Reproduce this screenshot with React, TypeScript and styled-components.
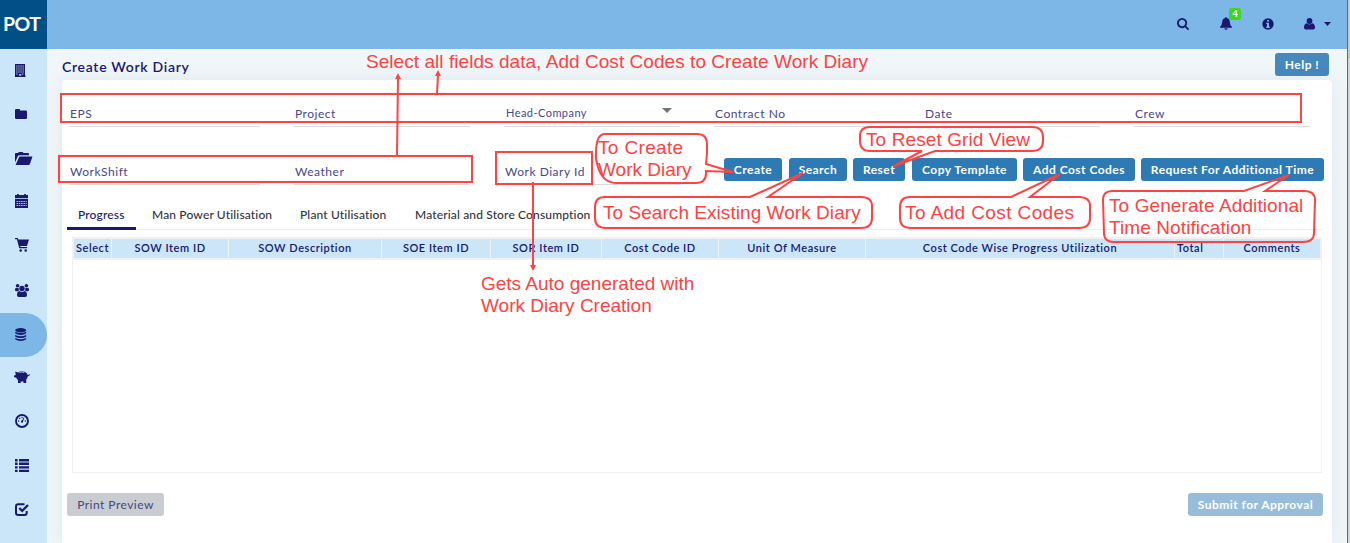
import React from "react";
import styled, { createGlobalStyle, css } from "styled-components";

const NAVY = "#191970";
const RED = "#fd4343";

const GlobalStyle = createGlobalStyle`
  * { box-sizing: border-box; }
  html, body { margin: 0; padding: 0; height: 543px; overflow: hidden; }
  body { font-family: Lato, "Liberation Sans", sans-serif; color: ${NAVY}; }
`;

const Screen = styled.div`
  position: relative;
  display: flex;
  width: 1350px;
  height: 543px;
  overflow: hidden;
  background: #f1f6f9;
`;
const Sidebar = styled.aside`
  flex: 0 0 47px;
  background: #cbe6f9;
  position: relative;
  z-index: 1;
`;
const Brand = styled.div`
  height: 49px;
  padding-left: 3px;
  background: #014f86;
  color: #fff;
  font-size: 19.5px;
  font-weight: 700;
  line-height: 48px;
  letter-spacing: -0.6px;
`;
const NavItem = styled.a<{ $active?: boolean; $lift?: boolean }>`
  display: flex;
  align-items: center;
  height: 44px;
  padding: 0 0 ${(p) => (p.$lift ? 4 : 2)}px 15px;
  border-radius: 0 22px 22px 0;
  ${(p) => p.$active && css`background: #7cb7e8;`}
  svg { display: block; overflow: visible; }
`;
const Body = styled.div`
  flex: 0 0 1300px;
  display: flex;
  flex-direction: column;
`;
const TopBar = styled.header`
  flex: 0 0 49px;
  display: flex;
  justify-content: flex-end;
  align-items: center;
  padding: 0 16px 2px 0;
  background: #7cb7e8;
  svg { display: block; }
`;
const TopIcon = styled.span<{ $gap: number }>`
  position: relative;
  margin-left: ${(p) => p.$gap}px;
`;
const Badge = styled.span`
  position: absolute;
  left: 9px;
  top: -9px;
  width: 12px;
  height: 12px;
  border-radius: 2px;
  background: #37d923;
  color: #fff;
  font-size: 9px;
  font-weight: 700;
  line-height: 12px;
  text-align: center;
`;
const TitleRow = styled.div`
  flex: 0 0 31px;
  display: flex;
  justify-content: space-between;
  align-items: flex-start;
  padding: 4px 18px 0 15px;
`;
const Title = styled.h1`
  margin: 0;
  height: 27px;
  font-size: 14px;
  line-height: 28px;
  font-weight: 600;
  letter-spacing: 0.7px;
`;
const Button = styled.button<{ $w: number; $gap?: number; $tone?: "help" | "submit" | "print" }>`
  flex: none;
  width: ${(p) => p.$w}px;
  height: 23px;
  margin: 0 0 0 ${(p) => p.$gap ?? 0}px;
  padding: 0;
  border: 0;
  border-radius: 3px;
  font-family: inherit;
  font-size: 12px;
  font-weight: 700;
  line-height: 23px;
  letter-spacing: 0.47px;
  white-space: nowrap;
  color: #fff;
  background: #2e7ab5;
  ${(p) => p.$tone === "help" && css`background: #4788bd;`}
  ${(p) => p.$tone === "submit" && css`background: #97bdda;`}
  ${(p) => p.$tone === "print" && css`background: #c9ccd1; color: #47477f; font-weight: 400;`}
`;
const Card = styled.main`
  flex: 1;
  width: 1270px;
  margin-left: 15px;
  border-radius: 4px 4px 0 0;
  background: #fff;
  box-shadow: 0 0 20px rgba(60, 100, 110, 0.09);
`;
const FieldRow = styled.div<{ $mt: number }>`
  display: grid;
  grid-template-columns: 191px repeat(5, 176px);
  column-gap: 34px;
  padding: ${(p) => p.$mt}px 0 0 7px;
`;
const Field = styled.div<{ $select?: boolean }>`
  display: flex;
  justify-content: space-between;
  height: 27px;
  padding: 3px 8px 0 1px;
  border-bottom: 1px solid #dcdcdc;
  color: #48488d;
  font-size: 12px;
  line-height: 21px;
  letter-spacing: 0.52px;
  white-space: nowrap;
  ${(p) => p.$select && css`font-size: 11px; letter-spacing: 0.45px; padding: 2px 8px 0 2px;`}
`;
const Caret = styled.span`
  width: 0;
  height: 0;
  margin-top: 6px;
  border: 5px solid transparent;
  border-top-color: #757575;
  border-bottom: 0;
`;
const Actions = styled.div`
  grid-column: 4 / 7;
  display: flex;
  padding-left: 10px;
`;
const Tabs = styled.nav`
  display: flex;
  height: 31px;
  margin: 14px 10px 0 5px;
  border-bottom: 1px solid #efefef;
`;
const Tab = styled.a<{ $active?: boolean; $w: number }>`
  width: ${(p) => p.$w}px;
  height: 31px;
  padding-left: 11px;
  margin-right: ${(p) => (p.$active ? 5 : 0)}px;
  font-size: 12px;
  font-weight: 500;
  line-height: 31px;
  letter-spacing: 0.15px;
  white-space: nowrap;
  color: #33333b;
  ${(p) => p.$active && css`color: ${NAVY}; border-bottom: 3px solid ${NAVY};`}
`;
const Grid = styled.section`
  width: 1250px;
  height: 236px;
  margin: 7px 0 0 10px;
  border: 1px solid #f1f1f1;
`;
const GridHead = styled.div`
  display: grid;
  grid-template-columns: 37px 116px 152px 108px 110px 116px 146px 308px 48px 96px;
  column-gap: 1px;
  padding: 1px 0 2px 1px;
  background: #f1f1f1;
`;
const HeadCell = styled.div<{ $left?: boolean }>`
  height: 19px;
  background: #cbe6f9;
  font-size: 11px;
  font-weight: 600;
  line-height: 18px;
  letter-spacing: 0.55px;
  text-align: ${(p) => (p.$left ? "left" : "center")};
  padding-left: ${(p) => (p.$left ? 2 : 0)}px;
  white-space: nowrap;
`;
const Footer = styled.div`
  display: flex;
  justify-content: space-between;
  padding: 20px 9px 0 5px;
`;
const WindowEdge = styled.div`
  flex: 0 0 3px;
  border-left: 1px solid #2e7ab5;
  background: linear-gradient(#c9c9c9 57px, #b5b5b5 57px, #b5b5b5 58px, #d4d4d4 58px);
`;
const Overlay = styled.svg`
  position: absolute;
  inset: 0;
  z-index: 2;
  fill: none;
  stroke: ${RED};
  stroke-width: 2;
`;
const Note = styled.p<{ $x: number; $y: number; $ls?: number }>`
  position: absolute;
  z-index: 3;
  left: ${(p) => p.$x}px;
  top: ${(p) => p.$y}px;
  margin: 0;
  font-family: "Liberation Sans", Arial, sans-serif;
  font-size: 19px;
  line-height: 22px;
  letter-spacing: ${(p) => p.$ls ?? 0}px;
  white-space: pre;
  color: ${RED};
`;

const Icon = ({ w = 14, h = 14, box, children }: { w?: number; h?: number; box?: string; children: React.ReactNode }) => (
  <svg width={w} height={h} viewBox={box ?? `0 0 ${w} ${h}`} fill={NAVY}>{children}</svg>
);

const Building = () => (
  <Icon w={11} h={13}>
    <path d="M0 0h10v11.500h.5V13H0z" />
    <path stroke="#cbe6f9" strokeWidth=".9" strokeDasharray="1.300 .8" d="M1.200 2h7.700M1.200 4h7.700M1.200 6h7.700M1.200 8h7.700M1.200 10h2.200M7 10h2" />
    <path fill="#cbe6f9" opacity=".75" d="M4 10h2.300v1.800H4z" />
  </Icon>
);
const Folder = () => (
  <Icon w={12} h={10}><path d="M0 1.200Q0 0 1.200 0h3Q5 0 5 .8v.6h5.800q1.200 0 1.200 1.200v6.200Q12 10 10.800 10H1.200Q0 10 0 8.800z" /></Icon>
);
const FolderOpen = () => (
  <Icon w={18} h={13}>
    <path d="M0 10.500V1.800Q0 .9.900.9H3L4 0h3.500l1 .9H13q1 0 1 1v1.300H4.300q-1 0-1.400.8zM4.400 4.400H17.500L15 11.800q-.4 1.200-1.500 1.200H.6z" />
  </Icon>
);
const Calendar = () => (
  <Icon w={13} h={14}>
    <path d="M0 1h2V0h1.800v1h5.400V0H11v1h2v3.200H0zM0 5h13v9H0z" />
    <path stroke="#cbe6f9" strokeWidth=".8" strokeDasharray="1.600 .7" fill="none" d="M1.500 7.500h10.300M1.500 9.500h10.300M1.500 11.500h10.300" />
  </Icon>
);
const Cart = () => (
  <Icon w={14} h={14}>
    <path d="M0 0h2.600l.8 1.500H14L12 8H5.200l.3 1.100h6.600v1.200H4.300L1.900 1.200H0z" />
    <circle cx="5.700" cy="12.500" r="1.300" /><circle cx="10.700" cy="12.500" r="1.300" />
  </Icon>
);
const Users = () => (
  <Icon w={14} h={13}>
    <circle cx="2.600" cy="1.800" r="1.800" /><circle cx="11.400" cy="1.800" r="1.800" /><circle cx="7" cy="4.500" r="2.700" />
    <path d="M0 5.800Q0 3.900 1.300 3.700q1 .6 2.300.2-.1 1.600.7 2.700-1 .1-1.500.7H1.300Q0 7.300 0 5.800zM14 5.800q0-1.900-1.300-2.100-1 .6-2.300.2.100 1.600-.7 2.700 1 .1 1.500.7h1.500Q14 7.300 14 5.800zM4.400 7.100q2.600 1.700 5.200 0 2.400.5 2.400 4.100 0 1.800-1.800 1.800H3.800Q2 13 2 11.200q0-3.600 2.400-4.100z" />
  </Icon>
);
const Database = () => (
  <Icon w={12} h={13}>
    <ellipse cx="5.700" cy="2.200" rx="5.500" ry="2.200" />
    <path d="M.2 3.800q5.500 2.500 11 0v1.500q-2 1.700-5.500 1.700T.2 5.300zM.2 6.900q5.500 2.500 11 0v1.500q-2 1.700-5.500 1.700T.2 8.400zM.2 10q5.500 2.500 11 0v1.200q-2 1.700-5.500 1.700T.2 11.200z" />
  </Icon>
);
const Piggy = () => (
  <Icon w={15} h={12} box="1 0 15 12">
    <path d="M1.200.6 4 1.500Q7-.6 10.500.7 13 1.600 13.700 4q1.100.5 1.200-1h.9q0 2.300-2 2.200-.2 2-1.600 3.400V12H9.500v-1.600H6.700V12H4V9Q2.700 8 2.300 6.800L0 6V4.600l1.800-.6z" />
    <path d="M5.300 1.500q2.500-1 5 0" stroke="#cbe6f9" strokeWidth=".8" fill="none" />
  </Icon>
);
const Gauge = () => (
  <Icon>
    <circle cx="7" cy="7" r="6" fill="none" stroke={NAVY} strokeWidth="1.900" />
    <circle cx="3.600" cy="7" r=".7" /><circle cx="4.700" cy="4.500" r=".7" /><circle cx="7" cy="3.500" r=".7" />
    <circle cx="10.400" cy="7" r=".7" /><circle cx="7" cy="7.700" r="1.100" />
    <path d="m6.600 7.500 2-3.900.7.300-1.500 4z" />
  </Icon>
);
const List = () => (
  <Icon w={14} h={13}>
    <path d="M0 0h2.600v2.400H0zM4 0h10v2.400H4zM0 3.600h2.600V6H0zM4 3.600h10V6H4zM0 7.200h2.600v2.300H0zM4 7.200h10v2.300H4zM0 10.700h2.600V13H0zM4 10.700h10V13H4z" />
  </Icon>
);
const Check = () => (
  <Icon w={14} h={13}>
    <path fill="none" stroke={NAVY} strokeWidth="2" d="M9.500 1.200H3.200Q1 1.200 1 3.400v6.400Q1 12 3.200 12h6.300q2.200 0 2.200-2.200V8" />
    <path fill="none" stroke={NAVY} strokeWidth="2.300" d="m4.300 5 2.900 2.900L13 2" />
  </Icon>
);
const Search = () => (
  <Icon w={12} h={12} box="0 128 1664 1664">
    <path d="M1152 832q0-185-131.500-316.500t-316.500-131.500-316.500 131.500-131.500 316.500 131.500 316.500 316.500 131.500 316.500-131.500 131.500-316.500zm512 832q0 52-38 90t-90 38q-54 0-90-38l-343-342q-179 124-399 124-143 0-273.500-55.500t-225-150-150-225-55.500-273.500 55.500-273.500 150-225 225-150 273.500-55.500 273.500 55.500 225 150 150 225 55.500 273.500q0 220-124 399l343 343q37 37 37 90z" />
  </Icon>
);
const Bell = () => (
  <Icon w={12} h={13}>
    <path d="M6 0q.8 0 .8.900 2.900.5 3 3.900.1 3.700 2.200 5.200v.8H0V10q2.100-1.500 2.200-5.200.1-3.400 3-3.900Q5.200 0 6 0zM4.400 11.200h3.200Q7.500 12.800 6 12.800T4.400 11.200z" />
  </Icon>
);
const Info = () => (
  <Icon w={12} h={12}>
    <circle cx="6" cy="6" r="5.700" />
    <path fill="#7cb7e8" d="M5 2h2v1.600H5zM4.200 4.700H7v3.900h.8V10H4.200V8.600H5V6h-.8z" />
  </Icon>
);
const User = () => (
  <Icon w={11} h={12}>
    <circle cx="5.500" cy="3" r="2.900" />
    <path d="M2.600 5.300q2.900 2.300 5.800 0Q11 5.800 11 9.800q0 1.700-1.700 1.700H1.700Q0 11.500 0 9.800 0 5.800 2.600 5.300z" />
  </Icon>
);

const NAV = [
  <Building />, <Folder />, <FolderOpen />, <Calendar />, <Cart />,
  <Users />, <Database />, <Piggy />, <Gauge />, <List />, <Check />,
];
const ACTIONS: [string, number, number][] = [
  ["Create", 58, 0], ["Search", 58, 7], ["Reset", 52, 6], ["Copy Template", 105, 7],
  ["Add Cost Codes", 112, 6], ["Request For Additional Time", 183, 6],
];
const TABS: [string, number][] = [
  ["Progress", 69], ["Man Power Utilisation", 148], ["Plant Utilisation", 115], ["Material and Store Consumption", 200],
];
const COLUMNS = ["Select", "SOW Item ID", "SOW Description", "SOE Item ID", "SOR Item ID", "Cost Code ID", "Unit Of Measure", "Cost Code Wise Progress Utilization", "Total", "Comments"];

export default function App() {
  return (
    <Screen>
      <GlobalStyle />
      <Sidebar>
        <Brand>POT</Brand>
        {NAV.map((icon, i) => <NavItem key={i} $active={i === 6} $lift={i > 6 || i === 3 || i === 4}>{icon}</NavItem>)}
      </Sidebar>
      <Body>
        <TopBar>
          <TopIcon $gap={0}><Search /></TopIcon>
          <TopIcon $gap={31}><Bell /><Badge>4</Badge></TopIcon>
          <TopIcon $gap={30}><Info /></TopIcon>
          <TopIcon $gap={30}><User /></TopIcon>
          <TopIcon $gap={9}><Icon w={7} h={4}><path d="M0 0h7L3.500 4z" /></Icon></TopIcon>
        </TopBar>
        <TitleRow>
          <Title>Create Work Diary</Title>
          <Button $w={54} $tone="help">Help !</Button>
        </TitleRow>
        <Card>
          <FieldRow $mt={20}>
            <Field>EPS</Field>
            <Field>Project</Field>
            <Field $select>Head-Company<Caret /></Field>
            <Field>Contract No</Field>
            <Field>Date</Field>
            <Field>Crew</Field>
          </FieldRow>
          <FieldRow $mt={31}>
            <Field>WorkShift</Field>
            <Field>Weather</Field>
            <Field>Work Diary Id</Field>
            <Actions>
              {ACTIONS.map(([label, w, gap]) => <Button key={label} $w={w} $gap={gap}>{label}</Button>)}
            </Actions>
          </FieldRow>
          <Tabs>
            {TABS.map(([label, w], i) => <Tab key={label} $w={w} $active={i === 0}>{label}</Tab>)}
          </Tabs>
          <Grid>
            <GridHead>
              {COLUMNS.map((c) => <HeadCell key={c} $left={c === "Total"}>{c}</HeadCell>)}
            </GridHead>
          </Grid>
          <Footer>
            <Button $w={97} $tone="print">Print Preview</Button>
            <Button $w={135} $tone="submit">Submit for Approval</Button>
          </Footer>
        </Card>
      </Body>
      <WindowEdge />
      <Overlay width="1350" height="543" viewBox="0 0 1350 543">
        <rect x="61" y="94" width="1240" height="28" />
        <rect x="59" y="156" width="413" height="26" />
        <rect x="496" y="152" width="96" height="32" />
        <path d="M397 155 398 78M437 93l1-18M533 182v86" />
        <path fill={RED} stroke="none" d="m395 79 3-6 3 6zM435 76l3-6 3 6zM530 265h6l-3 6z" />
        <path d="M605 134h92q10 0 10 10v9l-1 11 27 8-27-1v2q0 10-10 10h-79q-13 0-18-13-4-11-3-17 0-19 9-19z" />
        <path d="M605 197h145l53-24-35 24h93q11 0 11 9v12q0 10-11 10H606q-11 0-11-10v-11q0-10 10-10z" />
        <path d="M870 127h162q11 0 11 10v4q0 10-11 10h-97l-41 15 28-15h-52q-10 0-10-10v-5q0-9 10-9z" />
        <path d="M910 197h101l49-23-30 23h49q11 0 11 9v12q0 10-11 10H911q-11 0-11-10v-11q0-10 10-10z" />
        <path d="M1112 191h132l45-16-24 16h39q11 0 11 9l-1 33q0 9-11 9h-189q-10 0-10-9l-1-33q0-9 9-9z" />
      </Overlay>
      <Note $x={366} $y={51} $ls={0.05}>Select all fields data, Add Cost Codes to Create Work Diary</Note>
      <Note $x={598} $y={137} $ls={0.35}>To Create</Note>
      <Note $x={598} $y={159}>Work Diary</Note>
      <Note $x={866} $y={129} $ls={0.1}>To Reset Grid View</Note>
      <Note $x={603} $y={202} $ls={0.05}>To Search Existing Work Diary</Note>
      <Note $x={905} $y={202} $ls={0.4}>To Add Cost Codes</Note>
      <Note $x={1109} $y={195} $ls={0.1}>{"To Generate Additional\nTime Notification"}</Note>
      <Note $x={481} $y={273}>{"Gets Auto generated with\nWork Diary Creation"}</Note>
    </Screen>
  );
}
